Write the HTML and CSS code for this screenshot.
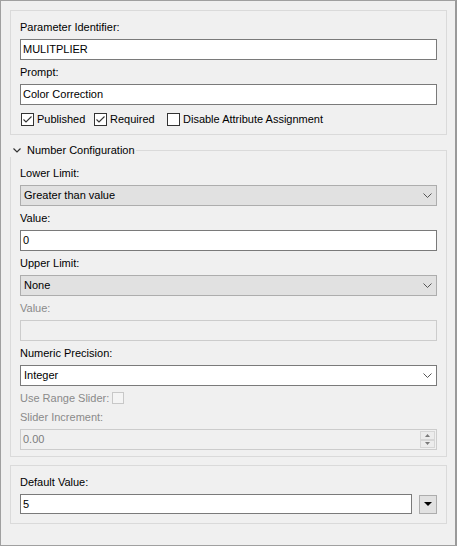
FILE: index.html
```html
<!DOCTYPE html>
<html>
<head>
<meta charset="utf-8">
<link rel="stylesheet" href="styles.css">
</head>
<body>
<div class="window">
  <div class="group g1">
    <div class="label">Parameter Identifier:</div>
    <div class="field">MULITPLIER</div>
    <div class="label">Prompt:</div>
    <div class="field">Color Correction</div>
    <div class="checks">
      <div class="check w73"><span class="box"><svg width="11" height="11" viewBox="0 0 11 11"><path d="M1.5 5.5 L4 8 L9.5 2.5" fill="none" stroke="#333" stroke-width="1.1"/></svg></span>Published</div>
      <div class="check w73"><span class="box"><svg width="11" height="11" viewBox="0 0 11 11"><path d="M1.5 5.5 L4 8 L9.5 2.5" fill="none" stroke="#333" stroke-width="1.1"/></svg></span>Required</div>
      <div class="check"><span class="box"></span>Disable Attribute Assignment</div>
    </div>
  </div>

  <div class="section">
    <div class="section-head">
      <svg class="caret" width="8" height="5" viewBox="0 0 8 5"><path d="M0.5 0.5 L4 4 L7.5 0.5" fill="none" stroke="#333" stroke-width="1.2"/></svg>
      <span class="title">Number Configuration</span>
      <span class="rule"></span>
    </div>
    <div class="section-body">
      <div class="label">Lower Limit:</div>
      <div class="select"><span class="val">Greater than value</span><svg class="chev" width="9" height="5" viewBox="0 0 9 5"><path d="M0.5 0.5 L4.5 4.5 L8.5 0.5" fill="none" stroke="#555" stroke-width="1"/></svg></div>
      <div class="label">Value:</div>
      <div class="field">0</div>
      <div class="label">Upper Limit:</div>
      <div class="select"><span class="val">None</span><svg class="chev" width="9" height="5" viewBox="0 0 9 5"><path d="M0.5 0.5 L4.5 4.5 L8.5 0.5" fill="none" stroke="#555" stroke-width="1"/></svg></div>
      <div class="label disabled">Value:</div>
      <div class="field off"></div>
      <div class="label">Numeric Precision:</div>
      <div class="select white"><span class="val">Integer</span><svg class="chev" width="9" height="5" viewBox="0 0 9 5"><path d="M0.5 0.5 L4.5 4.5 L8.5 0.5" fill="none" stroke="#555" stroke-width="1"/></svg></div>
      <div class="slider-row"><span class="label disabled slider-label">Use Range Slider:</span><span class="box off"></span></div>
      <div class="label disabled">Slider Increment:</div>
      <div class="field off spin-field">
        <span class="val">0.00</span>
        <span class="spin">
          <span class="spin-btn"><svg width="5" height="3" viewBox="0 0 5 3"><path d="M0 3 L2.5 0 L5 3Z" fill="#7a7a7a"/></svg></span>
          <span class="spin-btn"><svg width="5" height="3" viewBox="0 0 5 3"><path d="M0 0 L2.5 3 L5 0Z" fill="#7a7a7a"/></svg></span>
        </span>
      </div>
    </div>
  </div>

  <div class="group g3">
    <div class="label">Default Value:</div>
    <div class="default-row">
      <div class="field def">5</div>
      <div class="drop-btn"><svg width="8" height="4" viewBox="0 0 8 4"><path d="M0 0 L8 0 L4 4Z" fill="#000"/></svg></div>
    </div>
  </div>
</div>
</body>
</html>
```

FILE: styles.css
```css
* { box-sizing: border-box; }
html, body { margin: 0; padding: 0; background: #f0f0f0; }
body {
  font-family: "Liberation Sans", Arial, sans-serif;
  font-size: 11px;
  color: #000;
}
.window {
  width: 457px;
  height: 546px;
  border: 1px solid #a0a0a0;
  border-right: 2px solid #9a9a9a;
  background: #f0f0f0;
  padding: 9px 8px 0 9px;
}
.group {
  border: 1px solid #dadada;
  display: flex;
  flex-direction: column;
  gap: 5px;
  padding: 9px 9px 8px 9px;
}
.label {
  height: 14px;
  line-height: 14px;
  white-space: nowrap;
}
.label.disabled { color: #8a8a8a; }
.field {
  height: 21px;
  line-height: 19px;
  border: 1px solid #7a7a7a;
  background: #fff;
  padding: 0 3px 0 2px;
  white-space: nowrap;
}
.field.off {
  border-color: #cccccc;
  background: #f0f0f0;
  color: #7d7d7d;
}
.checks {
  display: flex;
  align-items: center;
  height: 14px;
  margin-top: 2px;
  line-height: 14px;
}
.check {
  display: flex;
  align-items: center;
  white-space: nowrap;
}
.check.w73 { width: 73px; }
.box {
  width: 13px;
  height: 13px;
  border: 1px solid #333;
  background: #fff;
  margin-left: 1px;
  margin-right: 3px;
  display: flex;
  align-items: center;
  justify-content: center;
  flex: none;
}
.box.off {
  border-color: #c8c8c8;
  background: #f4f4f4;
  width: 12px;
  height: 12px;
  margin-left: 0;
}
.slider-label { width: 92px; overflow: hidden; }
.section { margin-top: 8px; }
.section-head {
  display: flex;
  height: 14px;
  align-items: center;
}
.caret { margin-left: 3px; margin-right: 6px; flex: none; }
.title { line-height: 14px; white-space: nowrap; }
.rule {
  flex: 1;
  align-self: flex-end;
  height: 7px;
  margin-left: 1px;
  border-top: 1px solid #dadada;
  border-right: 1px solid #dadada;
}
.section-body {
  border: 1px solid #dadada;
  border-top: none;
  padding: 9px 9px 6px 9px;
  display: flex;
  flex-direction: column;
  gap: 5px;
}
.select {
  height: 21px;
  border: 1px solid #adadad;
  background: #e1e1e1;
  display: flex;
  align-items: center;
  padding: 0 4px 0 3px;
  line-height: 19px;
}
.select.white { background: #fff; border-color: #7a7a7a; }
.select .val { flex: 1; white-space: nowrap; }
.chev { flex: none; }
.slider-row {
  display: flex;
  align-items: center;
  height: 14px;
}
.spin-field {
  display: flex;
  align-items: stretch;
  padding-right: 1px;
}
.spin-field .val { flex: 1; }
.spin {
  width: 15px;
  display: flex;
  flex-direction: column;
  padding: 1px 0;
}
.spin-btn {
  flex: 1;
  border: 1px solid #d6d6d6;
  background: #ececec;
  display: flex;
  align-items: center;
  justify-content: center;
}
.g3 { margin-top: 8px; padding-bottom: 9px; }
.default-row {
  display: flex;
  align-items: center;
  gap: 7px;
}
.field.def { flex: 1; height: 20px; line-height: 18px; }
.drop-btn {
  width: 18px;
  height: 19px;
  margin-right: 0;
  border: 1px solid #adadad;
  background: #e1e1e1;
  display: flex;
  align-items: center;
  justify-content: center;
  flex: none;
}
```
